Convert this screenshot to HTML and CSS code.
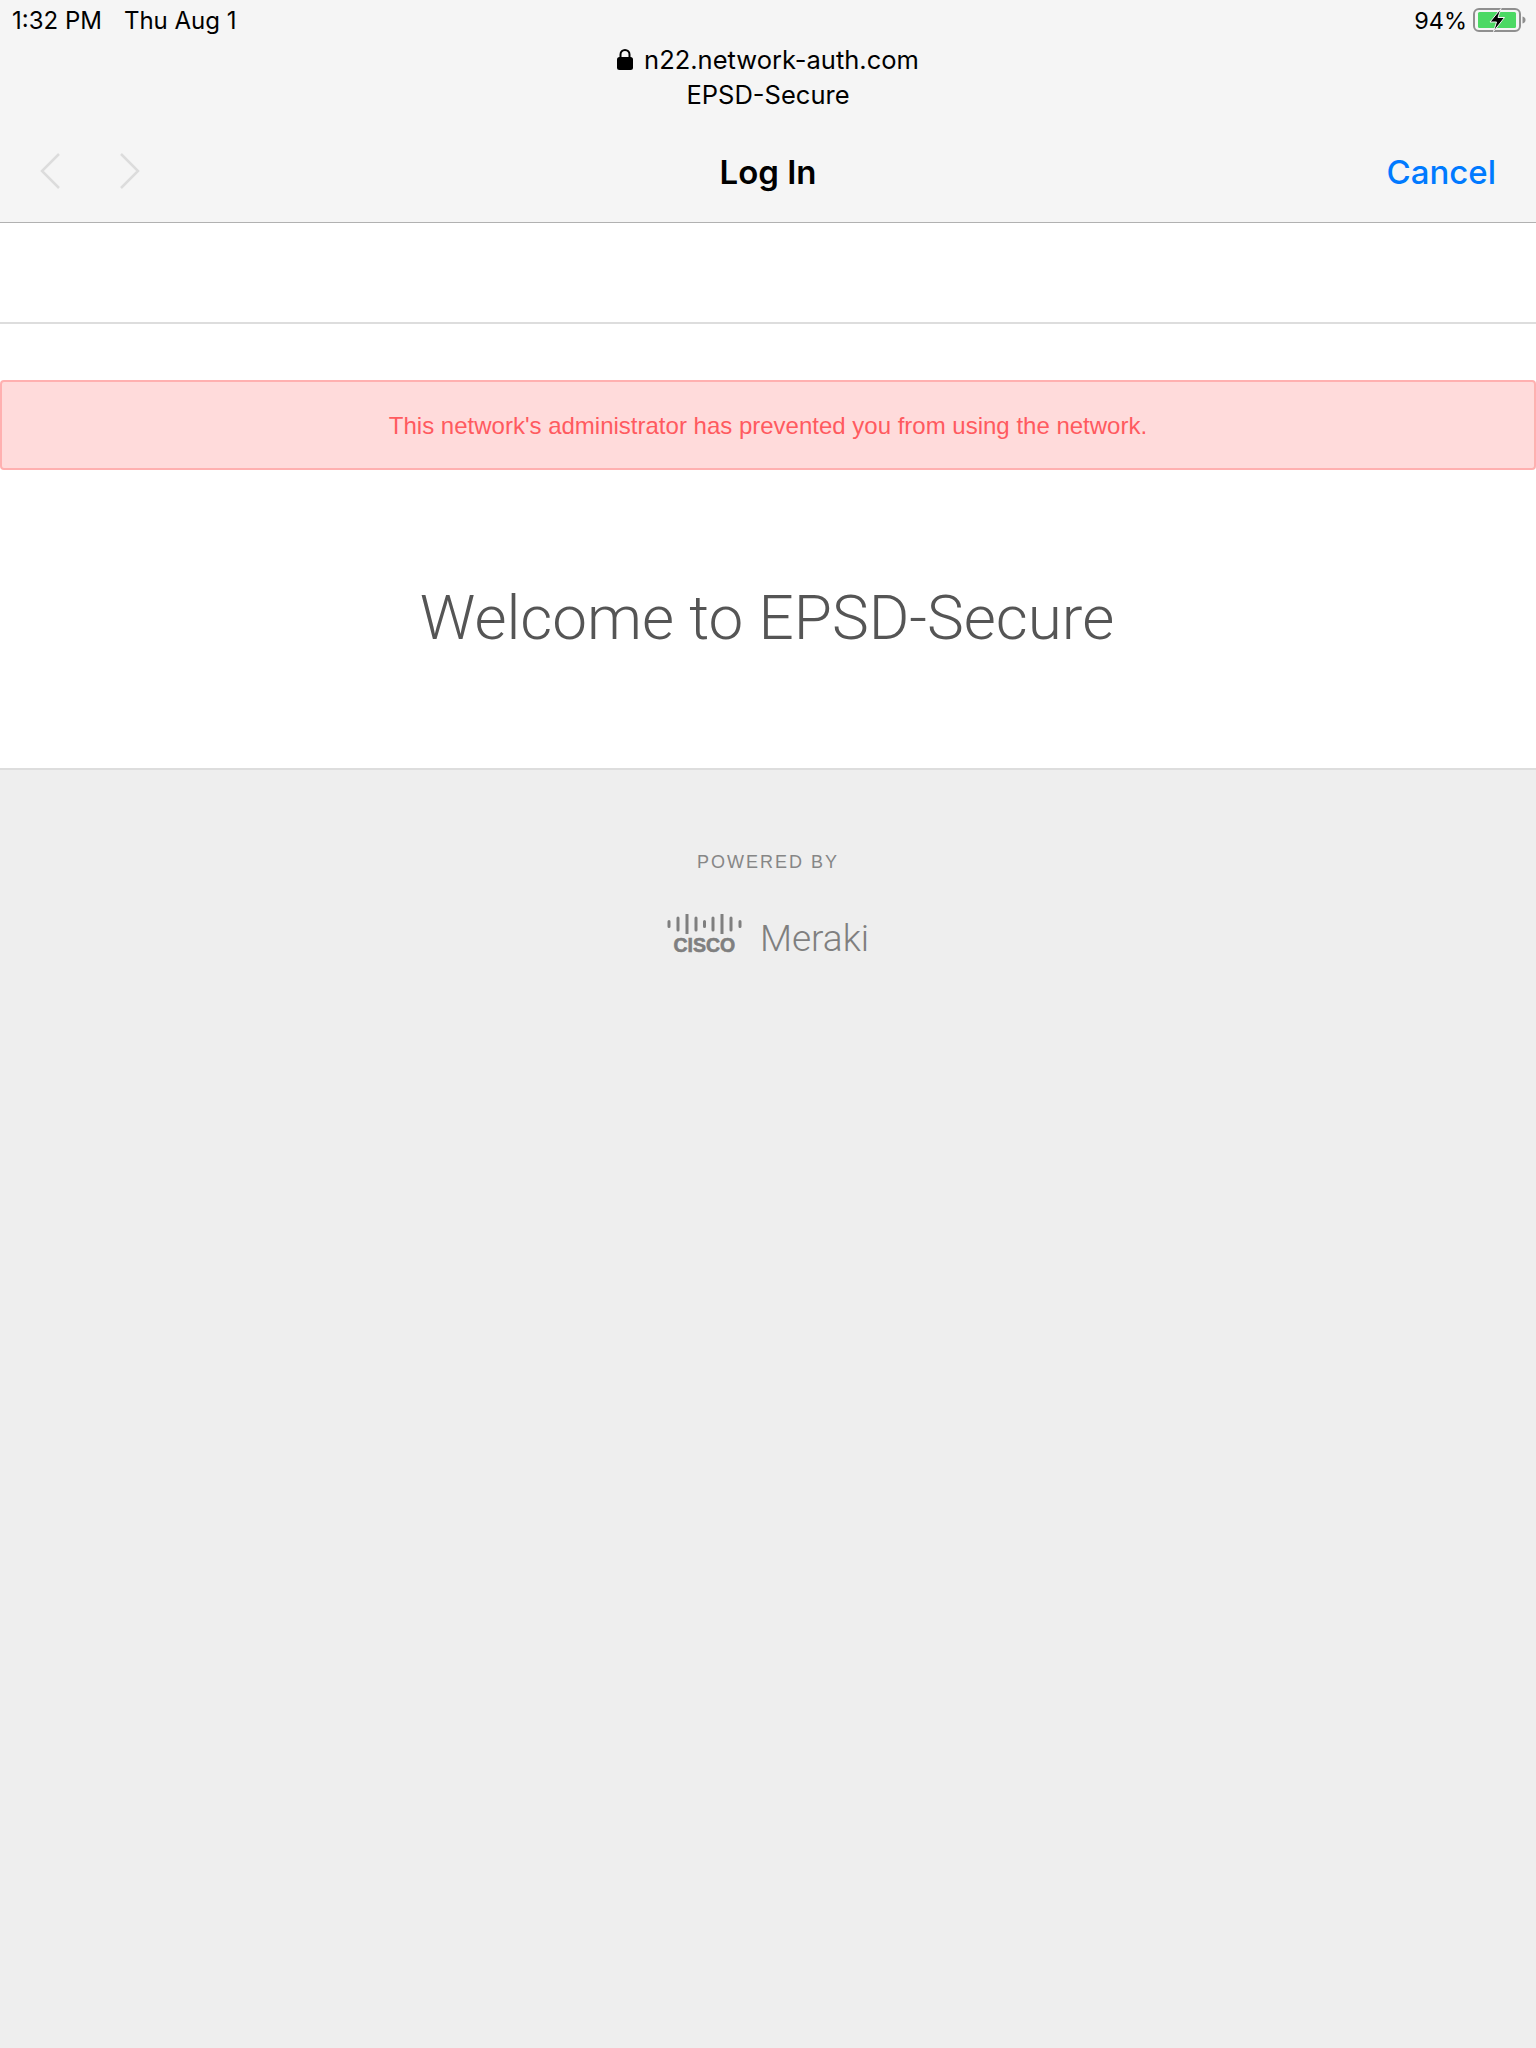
FILE: index.html
```html
<!DOCTYPE html>
<html lang="en">
<head>
  <meta charset="UTF-8" />
  <title>Log In</title>
  <link rel="stylesheet" href="styles.css">
</head>
<body>

<header class="toolbar">
  <div class="status-bar">
    <div class="status-time"><span>1:32 PM</span><span>Thu Aug 1</span></div>
    <div class="status-battery">
      <span class="battery-level">94%</span>
      <svg class="battery" width="53" height="24" viewBox="0 0 53 24">
        <rect x="1" y="1" width="46" height="22" rx="5" fill="none" stroke="#8f8f8f" stroke-width="2"/>
        <rect x="5" y="4" width="38" height="16" rx="1.500" fill="#4cd964"/>
        <path d="M49.500 8.500c2 .4 3 1.800 3 3.500s-1 3.100-3 3.500z" fill="#8f8f8f"/>
        <path d="M28 .5 17 14h6.500L20.500 23.500 31.500 9.500H25z" fill="#000" stroke="#f5f5f5"/>
      </svg>
    </div>
  </div>

  <div class="address">
    <div class="address-url">
      <svg class="lock" width="16" height="21" viewBox="0 0 16 21">
        <path d="M3.500 9V5.500a4.500 4.500 0 0 1 9 0V9" fill="none" stroke="#000" stroke-width="2"/>
        <rect x="0" y="8" width="16" height="13" rx="2.500" fill="#000"/>
      </svg>
      <span>n22.network-auth.com</span>
    </div>
    <div>EPSD-Secure</div>
  </div>

  <nav class="nav-row">
    <div class="nav-arrows">
      <svg width="20" height="36" viewBox="0 0 20 36"><path d="M19 1 2 18l17 17" fill="none" stroke="#dcdcdc" stroke-width="2.500"/></svg>
      <svg width="20" height="36" viewBox="0 0 20 36"><path d="m1 1 17 17L1 35" fill="none" stroke="#dcdcdc" stroke-width="2.500"/></svg>
    </div>
    <div class="nav-title">Log In</div>
    <div class="nav-cancel">Cancel</div>
  </nav>
</header>

<main class="content">
  <div class="empty-row"></div>
  <div class="alert">This network's administrator has prevented you from using the network.</div>
  <h1 class="welcome">Welcome to EPSD-Secure</h1>
</main>

<footer class="footer">
  <div class="powered">POWERED BY</div>
  <div class="brand">
    <div class="cisco">
      <svg width="75" height="20" viewBox="0 0 75 20">
        <path d="M2 7.500v5M11 4v12M20 .5v19M29 4v12M37.500 7.500v5M46 4v12M55 .5v19M64 4v12M73 7.500v5" fill="none" stroke="#7f7f7f" stroke-width="3" stroke-linecap="round"/>
      </svg>
      <span class="cisco-name">CISCO</span>
    </div>
    <span class="meraki">Meraki</span>
  </div>
</footer>

</body>
</html>
```

FILE: styles.css
```css
html, body { margin: 0; padding: 0; }
body { min-height: 2048px; display: flex; flex-direction: column; background: #eeeeee; font-family: Inter, "Liberation Sans", sans-serif; color: #000; }

.toolbar { height: 222px; background: #f5f5f5; border-bottom: 1px solid #b1b1b1; }
.status-bar { height: 40px; display: flex; justify-content: space-between; align-items: center; padding: 0 10px 0 12px; font-size: 24px; }
.status-time { display: flex; gap: 22px; }
.status-battery { display: flex; align-items: center; gap: 6px; }
.battery-level { font-size: 23.500px; }
.battery { display: block; }

.address { text-align: center; font-size: 25.500px; line-height: 35px; margin-top: 2px; }
.address-url { display: flex; justify-content: center; align-items: center; gap: 11px; }
.lock { display: block; }

.nav-row { display: grid; grid-template-columns: 1fr auto 1fr; align-items: center; padding: 0 40px; margin-top: 37px; height: 44px; }
.nav-arrows { display: flex; gap: 60px; }
.nav-arrows svg { display: block; }
.nav-title { padding-top: 2px; font-size: 33px; font-weight: 600; }
.nav-cancel { padding-top: 2px; font-size: 33px; font-weight: 550; color: #007aff; text-align: right; }

.content { background: #fff; height: 545px; border-bottom: 2px solid #dddddd; }
.empty-row { height: 99px; border-bottom: 2px solid #dddddd; }
.alert {
  margin-top: 56px; height: 90px; box-sizing: border-box; display: flex; align-items: center; justify-content: center;
  padding-top: 2px; background: #ffdbdb; border: 2px solid #ffb0b0; border-radius: 4px; color: #ff5a5f;
  font-family: "Liberation Sans", sans-serif; font-size: 24px;
}
.welcome { margin: 112px 0 0; padding-right: 2px; text-align: center; font-family: Roboto, sans-serif; font-weight: 300; font-size: 62px; line-height: 72px; color: #555; }

.footer { flex: 1; display: flex; flex-direction: column; align-items: center; }
.powered { margin-top: 81px; font-family: "Liberation Sans", sans-serif; font-size: 18px; line-height: 22px; letter-spacing: 2px; color: #868686; }
.brand { display: flex; align-items: flex-end; gap: 18px; margin-top: 41px; }
.cisco { display: flex; flex-direction: column; align-items: center; gap: 4px; }
.cisco svg { display: block; }
.cisco-name { font-family: "Liberation Sans", sans-serif; font-weight: bold; font-size: 19.500px; line-height: 14px; color: #7f7f7f; -webkit-text-stroke: 0.6px #7f7f7f; }
.meraki { font-family: Roboto, sans-serif; font-weight: 300; font-size: 37px; line-height: 26px; color: #7f7f7f; }
```
